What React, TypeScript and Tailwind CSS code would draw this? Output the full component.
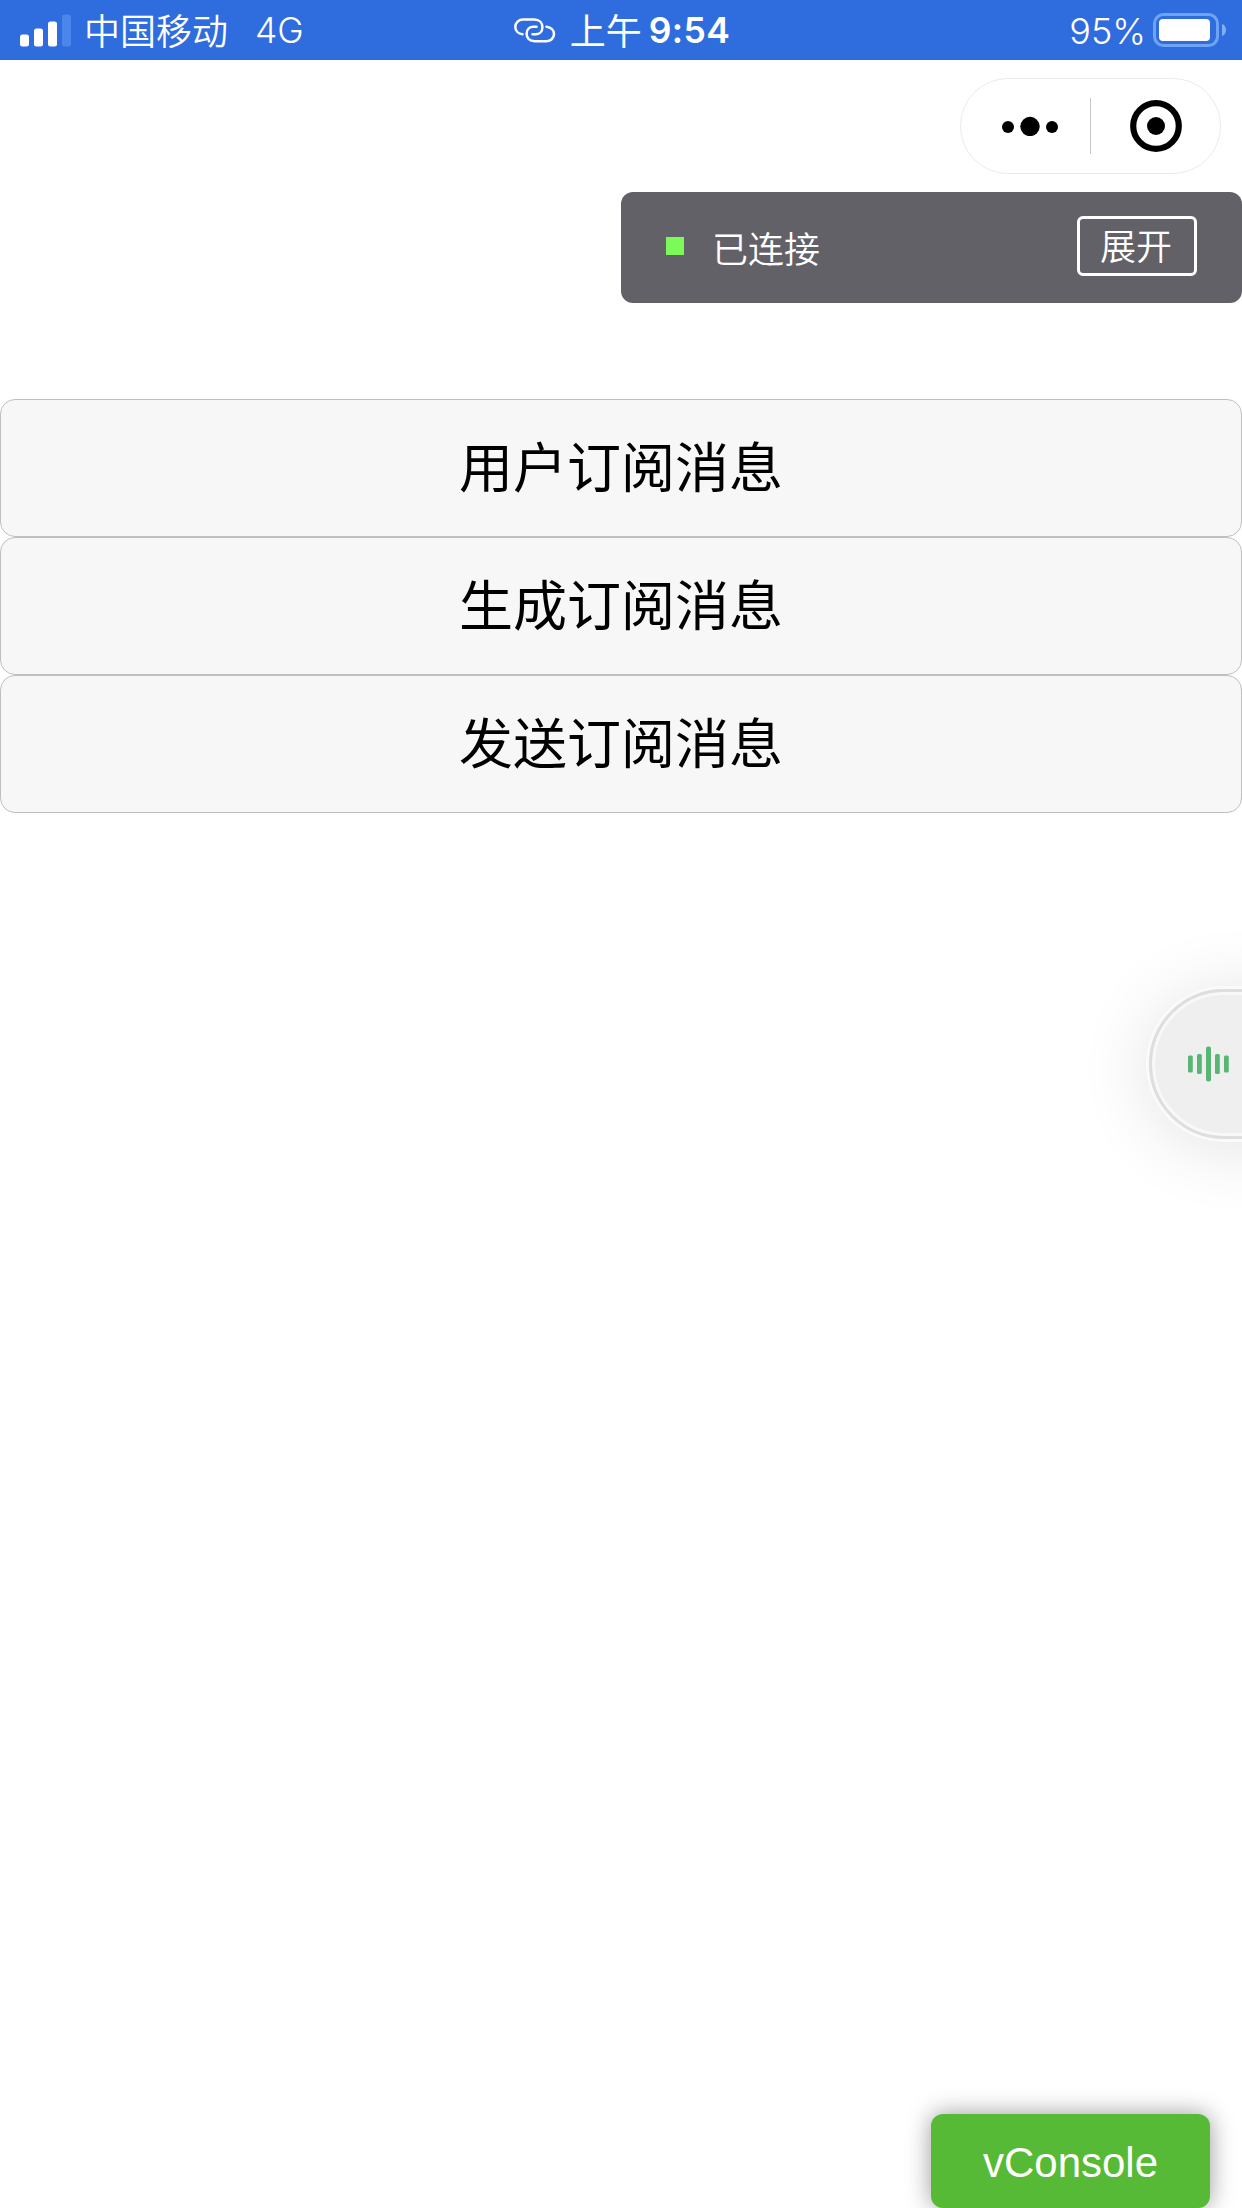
import React, { useState } from "react";

const ACTIONS = ["用户订阅消息", "生成订阅消息", "发送订阅消息"];

const SignalIcon = () => (
  <svg width="51" height="33" viewBox="0 0 51 33" fill="#fff">
    <rect x="0" y="20.5" width="9" height="12" rx="2.5" />
    <rect x="14" y="14.5" width="9" height="18" rx="2.5" />
    <rect x="28" y="7.5" width="9" height="25" rx="2.5" />
    <rect x="42" y="0.5" width="9" height="32" rx="2.5" fill="#4b87ea" />
  </svg>
);

const LinkIcon = () => (
  <svg width="42" height="25" viewBox="0 0 42 25" fill="none" stroke="#fff" strokeWidth="2.5" strokeLinecap="round">
    <path d="M8.5 16.3C4.5 15.8 1.3 13 1.3 9C1.3 4.6 4.8 1.6 9 1.6H20.5C25.5 1.6 28.4 5 28.4 9.2C28.4 13.4 25.5 16.3 21.5 16.3H18.5" />
    <path d="M32.5 8.7C37 9.2 40 12 40 16C40 20.4 36.5 23.2 32.3 23.2H20.8C15.5 23.2 12.6 20 12.6 15.8C12.6 11.6 15.5 8.7 19.5 8.7H22.5" />
  </svg>
);

const BatteryIcon = () => (
  <svg width="73" height="34" viewBox="0 0 73 34" fill="none">
    <rect x="1.5" y="1.5" width="63" height="31" rx="9" stroke="#6fa4f4" strokeWidth="3" />
    <rect x="6" y="6" width="51" height="22" rx="4" fill="#fff" />
    <path d="M69 11C71.5 11.8 73 14 73 17C73 20 71.5 22.2 69 23Z" fill="#7fb0f7" />
  </svg>
);

const StatusBar = () => (
  <header className="grid h-[60px] grid-cols-3 items-center bg-[#2f6cdd] pr-4 pl-5 text-[36px] leading-[60px] text-white">
    <div className="flex items-center">
      <SignalIcon />
      <span className="-mt-[2px] ml-[13px] font-[350]">中国移动</span>
      <span className="ml-[27px] pt-[2px] font-['Inter'] text-[35.5px] leading-[56px] font-[350]">4G</span>
    </div>
    <div className="flex items-center justify-center pr-[2px]">
      <LinkIcon />
      <span className="-mt-[2px] ml-[14px] font-normal">上午</span>
      <span className="ml-[7px] pt-[2px] font-['Inter'] text-[35.5px] leading-[56px] font-semibold tracking-[0.4px]">9:54</span>
    </div>
    <div className="flex items-center justify-end">
      <span className="mr-[7px] pt-[2px] font-['Inter'] text-[36px] leading-[56px] font-[350]">95%</span>
      <BatteryIcon />
    </div>
  </header>
);

const Capsule = () => (
  <div className="mt-[18px] mr-[21px] flex h-24 w-[261px] items-center self-end rounded-full border border-[#ebebeb] bg-white">
    <div className="flex w-[129px] shrink-0 justify-center pl-[8px]">
      <svg width="58" height="20" viewBox="0 0 58 20">
        <circle cx="7" cy="11" r="6" />
        <circle cx="29" cy="10.5" r="9.7" />
        <circle cx="51" cy="11" r="6" />
      </svg>
    </div>
    <div className="h-14 w-px bg-[#c8c8c8]" />
    <div className="flex flex-1 justify-center">
      <svg width="52" height="52" viewBox="0 0 52 52">
        <circle cx="26" cy="26" r="22.8" fill="none" stroke="#000" strokeWidth="6.2" />
        <circle cx="26" cy="26" r="9" />
      </svg>
    </div>
  </div>
);

const DebugPanel = () => {
  const [open, setOpen] = useState(false);

  return (
    <div className="mt-[18px] flex h-[111px] w-1/2 items-center self-end rounded-xl bg-[#626167] pr-[45px] pl-[45px] text-[36px] font-[350] text-white">
      <div className="mb-[3px] size-[18px] bg-[#7cfb58]" />
      <span className="ml-[28px] pb-[2px]">已连接</span>
      <button
        onClick={() => setOpen(!open)}
        className="mb-[3px] ml-auto flex h-[60px] w-[120px] items-center justify-center rounded-md border-[3px] border-white pr-[2px] pb-[4px]"
      >
        展开
      </button>
    </div>
  );
};

const VoiceBall = () => (
  <div className="absolute top-[989px] -right-[107px] flex h-[150px] w-[200px] items-center rounded-full border-[3px] border-[#dedede] bg-[#efefef] pl-[36px] shadow-[0_0_0_3px_#fafafa,0_6px_75px_rgba(0,0,0,0.12),inset_0_0_0_3px_#f8f8f8]">
    <svg width="41" height="36" viewBox="0 0 41 36" fill="#58b573">
      <rect x="0" y="9.5" width="4.8" height="17" rx="1.5" />
      <rect x="9" y="8" width="4.8" height="20" rx="1.5" />
      <rect x="18" y="0.5" width="5" height="35" rx="2" />
      <rect x="27" y="8" width="4.8" height="20" rx="1.5" />
      <rect x="36" y="9.5" width="4.8" height="17" rx="1.5" />
    </svg>
  </div>
);

export default function App() {
  return (
    <div className="relative flex h-[2208px] w-[1242px] flex-col overflow-hidden bg-white font-['Noto_Sans_CJK_SC',sans-serif] text-black">
      <StatusBar />
      <Capsule />
      <DebugPanel />
      <main className="mt-24 flex flex-col">
        {ACTIONS.map((label) => (
          <button
            key={label}
            className="h-[138px] rounded-[15px] border border-[#bfbfbf] bg-[#f7f7f7] pb-[6px] text-[54px] leading-[130px]"
          >
            {label}
          </button>
        ))}
      </main>
      <VoiceBall />
      <button className="absolute right-8 bottom-0 h-[94px] w-[279px] rounded-xl bg-[#56ba36] pt-[3px] font-['Liberation_Sans',sans-serif] text-[42px] text-white shadow-[0_0_24px_rgba(0,0,0,0.4)]">
        vConsole
      </button>
    </div>
  );
}
